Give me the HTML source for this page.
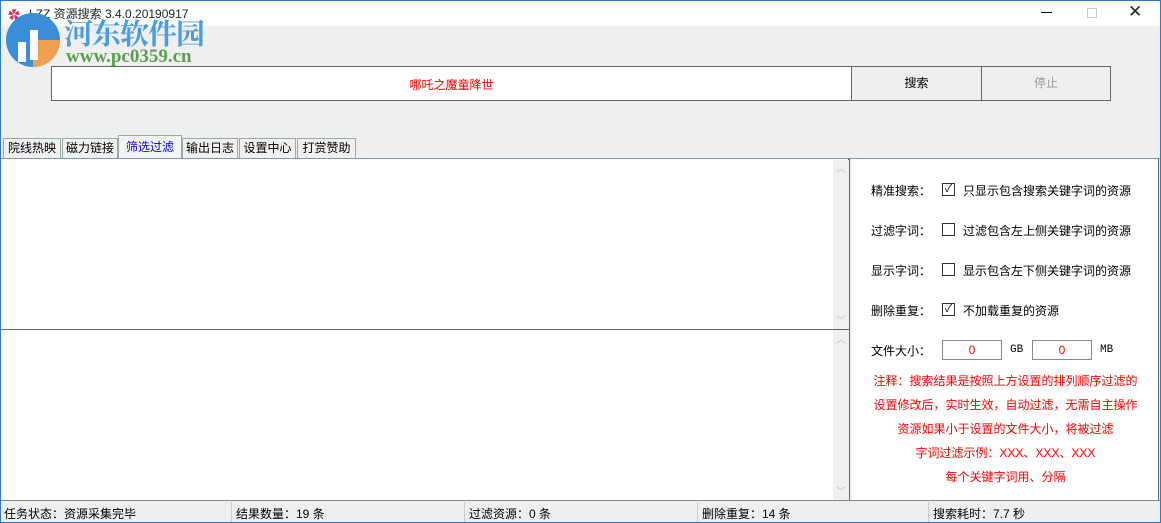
<!DOCTYPE html>
<html><head><meta charset="utf-8"><style>
*{margin:0;padding:0;box-sizing:border-box}
body{width:1161px;height:523px;overflow:hidden;background:#efefef;font-family:"Liberation Sans","Noto Sans CJK SC",sans-serif;font-size:12px;color:#000;position:relative}
.a{position:absolute}
.win{left:0;top:0;width:1161px;height:523px;border:1px solid #2b7bd6}
.title{left:1px;top:1px;width:1159px;height:25px;background:#fff}
.tab{position:absolute;top:138px;height:20px;border:1px solid #9aa;border-bottom:none;background:#f0f0f0;font-size:12px;line-height:18px;text-align:center}
.red{color:#f00}
.box{position:absolute;background:#fff;border:1px solid #777}
</style></head><body>
<div class="a title"></div>
<div class="a" style="left:8px;top:6px;color:#d0306a;font-size:12px">✿</div>
<div class="a" style="left:29px;top:5px;font-size:12px;color:#222">LZZ 资源搜索 3.4.0.20190917</div>
<div class="a" style="left:1041px;top:12px;width:11px;height:1px;background:#000"></div>
<div class="a" style="left:1087px;top:8px;width:10px;height:10px;border:1px solid #ccc"></div>
<div class="a" style="left:1128px;top:2px;font-size:17px;color:#222">✕</div>
<svg class="a" style="left:4px;top:12px" width="58" height="56"><circle cx="29" cy="28" r="27" fill="#3a8ed8"/><path d="M29 28 L56 28 A27 27 0 0 1 29 55Z" fill="#f0a050"/><path d="M14 30 h8 v20 h-8z M26 18 h8 v30 h-8z" fill="#fff"/></svg>
<div class="a" style="left:64px;top:12px;font-size:29px;font-weight:bold;color:#4a9ee0;font-family:'Noto Serif CJK SC',serif;letter-spacing:-1px">河东软件园</div>
<div class="a" style="left:66px;top:46px;font-size:19px;font-weight:bold;color:#5aa050;font-family:'Liberation Serif',serif">www.pc0359.cn</div>
<div class="box" style="left:51px;top:66px;width:801px;height:35px;border-color:#666"></div>
<div class="a red" style="left:51px;top:76px;width:801px;text-align:center">哪吒之魔童降世</div>
<div class="a" style="left:851px;top:66px;width:131px;height:35px;border:1px solid #666;text-align:center;line-height:33px">搜索</div>
<div class="a" style="left:981px;top:66px;width:130px;height:35px;border:1px solid #666;text-align:center;line-height:33px;color:#999">停止</div>
<div class="tab" style="left:3px;width:58px">院线热映</div>
<div class="tab" style="left:62px;width:56px">磁力链接</div>
<div class="tab" style="left:118px;width:64px;top:135px;height:24px;color:#00f;background:#f4f4f4;line-height:22px">筛选过滤</div>
<div class="tab" style="left:182px;width:56px">输出日志</div>
<div class="tab" style="left:239px;width:57px">设置中心</div>
<div class="tab" style="left:297px;width:59px">打赏赞助</div>
<div class="a" style="left:1px;top:158px;width:1159px;height:1px;background:#7a9ab0"></div>
<div class="a" style="left:1px;top:159px;width:849px;height:341px;background:#fff;border-right:2px solid #666"></div>
<div class="a" style="left:833px;top:160px;width:16px;height:340px;background:#f0f0f0"></div>
<div class="a" style="left:1px;top:329px;width:849px;height:1px;background:#666"></div>
<div class="a" style="left:836px;top:160px;color:#bbb;font-size:10px">︿</div>
<div class="a" style="left:836px;top:312px;color:#bbb;font-size:10px">﹀</div>
<div class="a" style="left:836px;top:331px;color:#bbb;font-size:10px">︿</div>
<div class="a" style="left:836px;top:483px;color:#bbb;font-size:10px">﹀</div>
<div class="a" style="left:852px;top:159px;width:307px;height:341px;background:#fff;border-right:1px solid #666"></div>
<div class="a" style="left:871px;top:182px">精准搜索：</div>
<div class="a" style="left:942px;top:183px;width:13px;height:13px;border:1px solid #333;font-size:11px;line-height:11px;text-align:center">✓</div>
<div class="a" style="left:963px;top:182px">只显示包含搜索关键字词的资源</div>
<div class="a" style="left:871px;top:222px">过滤字词：</div>
<div class="a" style="left:942px;top:223px;width:13px;height:13px;border:1px solid #333"></div>
<div class="a" style="left:963px;top:222px">过滤包含左上侧关键字词的资源</div>
<div class="a" style="left:871px;top:262px">显示字词：</div>
<div class="a" style="left:942px;top:263px;width:13px;height:13px;border:1px solid #333"></div>
<div class="a" style="left:963px;top:262px">显示包含左下侧关键字词的资源</div>
<div class="a" style="left:871px;top:302px">删除重复：</div>
<div class="a" style="left:942px;top:303px;width:13px;height:13px;border:1px solid #333;font-size:11px;line-height:11px;text-align:center">✓</div>
<div class="a" style="left:963px;top:302px">不加载重复的资源</div>
<div class="a" style="left:871px;top:342px">文件大小：</div>
<div class="box" style="left:942px;top:340px;width:60px;height:20px;border-color:#888;color:#f00;text-align:center;line-height:18px">0</div>
<div class="a" style="left:1010px;top:344px;font-size:11px;font-family:'Liberation Mono',monospace">GB</div>
<div class="box" style="left:1032px;top:340px;width:60px;height:20px;border-color:#888;color:#f00;text-align:center;line-height:18px">0</div>
<div class="a" style="left:1100px;top:344px;font-size:11px;font-family:'Liberation Mono',monospace">MB</div>
<div class="a red" style="left:852px;top:369px;width:307px;text-align:center;line-height:24px">注释：搜索结果是按照上方设置的排列顺序过滤的<br>设置修改后，实时生效，自动过滤，无需自主操作<br>资源如果小于设置的文件大小，将被过滤<br>字词过滤示例：XXX、XXX、XXX<br>每个关键字词用、分隔</div>
<div class="a" style="left:1px;top:500px;width:1159px;height:1px;background:#888"></div>
<div class="a" style="left:4px;top:505px">任务状态：资源采集完毕</div>
<div class="a" style="left:231px;top:502px;width:1px;height:20px;background:#ccc"></div>
<div class="a" style="left:236px;top:505px">结果数量：19 条</div>
<div class="a" style="left:464px;top:502px;width:1px;height:20px;background:#ccc"></div>
<div class="a" style="left:469px;top:505px">过滤资源：0 条</div>
<div class="a" style="left:697px;top:502px;width:1px;height:20px;background:#ccc"></div>
<div class="a" style="left:702px;top:505px">删除重复：14 条</div>
<div class="a" style="left:928px;top:502px;width:1px;height:20px;background:#ccc"></div>
<div class="a" style="left:933px;top:505px">搜索耗时：7.7 秒</div>
<div class="a win"></div>
</body></html>
